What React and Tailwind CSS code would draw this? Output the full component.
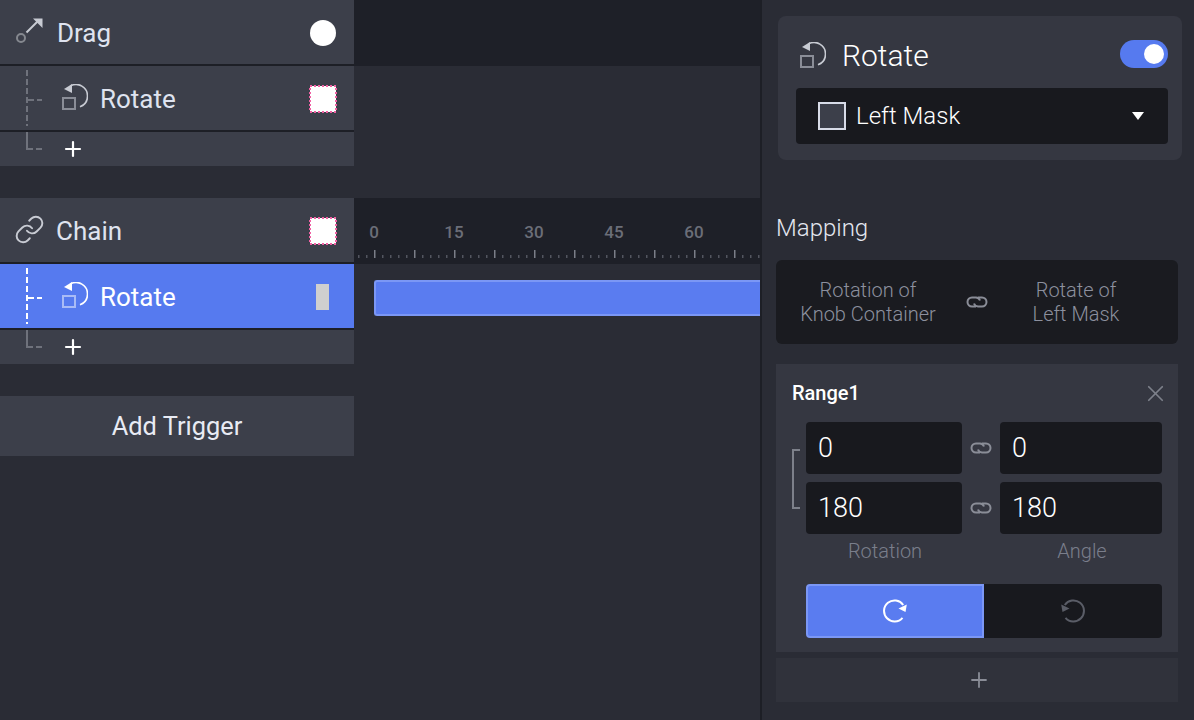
import { Link, Plus, X } from "lucide-react";

const RotateIcon = ({ active }) => (
  <svg width="26" height="26" viewBox="0 0 26 26" fill="none" className="shrink-0">
    <rect x="1" y="14" width="12" height="11" stroke={active ? "#a9bbf6" : "#8a8d97"} strokeWidth="2" />
    <path d="M8.5 1.9A11.5 11.5 0 0 1 25.5 12A11.5 11.5 0 0 1 18 22.8" stroke={active ? "#ffffff" : "#c8cbd3"} strokeWidth="1.6" />
    <path d="M2 5L10 0V9Z" fill={active ? "#ffffff" : "#c8cbd3"} />
  </svg>
);

const DragIcon = () => (
  <svg width="28" height="28" viewBox="0 0 28 28" fill="none" className="shrink-0">
    <circle cx="5" cy="21" r="4" stroke="#85888f" strokeWidth="2" />
    <path d="M10.5 15.5L23 3" stroke="#c8cbd3" strokeWidth="2" />
    <path d="M17 1.5H26.5V11Z" fill="#c8cbd3" />
  </svg>
);

const ChainSmall = ({ color = "#8a8d97" }) => (
  <svg width="22" height="12" viewBox="0 0 22 12" fill="none" className="shrink-0">
    <path d="M10 10.5H6a4.5 4.5 0 0 1 0-9H10a4.5 4.5 0 0 1 4 3" stroke={color} strokeWidth="2" />
    <path d="M12 1.5H16a4.5 4.5 0 0 1 0 9H12a4.5 4.5 0 0 1-4-3" stroke={color} strokeWidth="2" />
  </svg>
);

const Marquee = () => (
  <svg width="28" height="28" viewBox="0 0 28 28" className="shrink-0 -mx-[1px] mt-[2px]">
    <rect x="1" y="1" width="26" height="26" fill="#ffffff" stroke="#f062a4" strokeWidth="2" strokeDasharray="2 2" />
  </svg>
);

const TreeLines = ({ top }) => (
  <svg width="20" height="100" viewBox="0 0 20 100" fill="none" className="absolute left-[26px] top-[70px]">
    <path d="M1 0V56" stroke={top} strokeWidth="2" strokeDasharray="6 3" />
    <path d="M2 30H16" stroke={top} strokeWidth="2" strokeDasharray="6 3" />
    <path d="M1 62V79H7M10 79H16" stroke="#6f727c" strokeWidth="2" />
  </svg>
);

const Row = ({ icon, label, right, active, sub }) => (
  <div className={`h-[64px] flex items-center justify-between ${sub ? "pl-[62px]" : "pl-[16px]"} pr-[18px] ${active ? "bg-[#567aef]" : "bg-[#3c3f4a]"}`}>
    <div className={`flex items-center ${sub ? "gap-[12px]" : "gap-[13px]"}`}>
      <div className="pb-[2px]">{icon}</div>
      <span className={`text-[26px] leading-none pt-[2px] ${active ? "text-white" : "text-[#dfe3ef]"}`}>{label}</span>
    </div>
    {right}
  </div>
);

const AddRow = () => (
  <div className="h-[34px] bg-[#3c3f4a] flex items-center pl-[61px]">
    <Plus size={24} strokeWidth={2.2} color="#ffffff" />
  </div>
);

const Group = ({ icon, label, right, subRight, active }) => (
  <div className="relative">
    <Row icon={icon} label={label} right={right} />
    <div className="h-[2px] bg-[#1d1f26]" />
    <Row sub active={active} icon={<RotateIcon active={active} />} label="Rotate" right={subRight} />
    <div className="h-[2px] bg-[#1d1f26]" />
    <AddRow />
    <TreeLines top={active ? "#ffffff" : "#6f727c"} />
  </div>
);

const Ruler = () => {
  const ticks = [];
  for (let x = 4; x < 406; x += 8) {
    const major = (x - 20) % 40 === 0;
    ticks.push(<rect key={x} x={x} y={major ? 0 : 5} width="1.5" height={major ? 8 : 3} fill={major ? "#7b7e88" : "#52555f"} />);
  }
  return (
    <svg width="406" height="8" viewBox="0 0 406 8" className="block mt-[8px]">
      {ticks}
    </svg>
  );
};

const ValueInput = ({ value, wide }) => (
  <div className={`${wide ? "w-[162px]" : "w-[156px]"} h-[52px] bg-[#18191e] rounded-[4px] flex items-center pl-[12px] text-[27px] font-light text-white`}>
    {value}
  </div>
);

const Spin = ({ color, flip }) => (
  <svg width="24" height="24" viewBox="0 0 24 24" fill="none" className={flip ? "-scale-x-100" : ""}>
    <path d="M20.2 6A10.5 10.5 0 1 0 19.5 18.8" stroke={color} strokeWidth="2" />
    <path d="M15.5 9.5L23.8 5.5L22.5 13Z" fill={color} />
  </svg>
);

export default function App() {
  const labels = ["0", "15", "30", "45", "60"];
  return (
    <div className="w-[1194px] h-[720px] overflow-hidden flex bg-[#2a2c35] font-[Roboto,sans-serif]">
      <div className="w-[354px] shrink-0">
        <Group icon={<DragIcon />} label="Drag" right={<div className="w-[26px] h-[26px] mt-[2px] rounded-full bg-white" />} subRight={<Marquee />} />
        <div className="h-[32px]" />
        <Group active icon={<Link size={31} strokeWidth={1.5} color="#c8cbd3" className="-mx-[2px]" />} label="Chain" right={<Marquee />}
          subRight={<div className="w-[13px] h-[26px] mt-[2px] bg-[#cfcfcf] mr-[7px]" />} />
        <button className="mt-[32px] w-full h-[60px] bg-[#3c3f4a] text-[25.4px] text-[#e8ebf4]">Add Trigger</button>
      </div>

      <div className="w-[406px] shrink-0">
        <div className="h-[66px] bg-[#1e2028]" />
        <div className="h-[132px]" />
        <div className="h-[66px] bg-[#1e2028] pt-[24px]">
          <div className="flex gap-[40px]">
            {labels.map((l) => (
              <span key={l} className="w-[40px] text-center text-[17px] leading-[20px] font-medium text-[#6b6e78]">{l}</span>
            ))}
          </div>
          <Ruler />
        </div>
        <div className="pt-[16px] pl-[20px]">
          <div className="h-[36px] bg-[#5a7cf0] border-2 border-r-0 border-[#7b97f5] rounded-l-[3px]" />
        </div>
      </div>

      <div className="flex-1 border-l-2 border-[#1d1f26] pl-[14px] pt-[16px]">
        <div className="ml-[2px] w-[404px] h-[144px] bg-[#353741] rounded-[8px] pt-[24px] px-[18px] pr-[14px]">
          <div className="flex items-center justify-between pl-[4px] h-[28px]">
            <div className="flex items-center gap-[16px]">
              <div className="pt-[2px]"><RotateIcon /></div>
              <span className="text-[30px] leading-none pt-[4px] font-light text-white">Rotate</span>
            </div>
            <div className="w-[48px] h-[28px] rounded-full bg-[#567aef] flex items-center justify-end pr-[4px]">
              <div className="w-[20px] h-[20px] rounded-full bg-white" />
            </div>
          </div>
          <div className="mt-[20px] h-[56px] bg-[#18191e] rounded-[4px] flex items-center justify-between pl-[22px] pr-[24px]">
            <div className="flex items-center gap-[10px]">
              <div className="w-[28px] h-[28px] border-2 border-[#d8dce8] bg-[#3c3f4a]" />
              <span className="text-[24px] font-light text-white">Left Mask</span>
            </div>
            <svg width="12" height="8" viewBox="0 0 12 8"><path d="M0 0H12L6 8Z" fill="#ffffff" /></svg>
          </div>
        </div>

        <div className="mt-[52px] text-[24px] leading-[32px] font-light text-[#e4e7f0]">Mapping</div>
        <div className="mt-[16px] w-[402px] h-[84px] bg-[#1a1b20] rounded-[6px] flex items-center text-[20px] leading-[24px] font-light text-[#8c909e]">
          <div className="w-[184px] text-center pb-[1px]">Rotation of<br />Knob Container</div>
          <div className="w-[34px] flex justify-center"><ChainSmall /></div>
          <div className="w-[164px] text-center pb-[1px]">Rotate of<br />Left Mask</div>
        </div>

        <div className="mt-[20px] w-[402px] h-[288px] bg-[#353741] relative">
          <div className="flex items-center justify-between h-[58px] pl-[16px] pr-[9px]">
            <span className="text-[20px] font-medium text-white">Range1</span>
            <X size={27} strokeWidth={1.5} color="#7d808a" />
          </div>
          <div className="flex pl-[30px] items-center">
            <div className="w-[156px] flex flex-col gap-[8px]">
              <ValueInput value="0" />
              <ValueInput value="180" />
            </div>
            <div className="w-[38px] flex flex-col items-center gap-[48px]">
              <ChainSmall />
              <ChainSmall />
            </div>
            <div className="flex flex-col gap-[8px]">
              <ValueInput value="0" wide />
              <ValueInput value="180" wide />
            </div>
          </div>
          <div className="absolute left-[16px] top-[85px] w-[8px] h-[60px] border-2 border-r-0 border-[#7d808a]" />
          <div className="flex pl-[31px] text-[20px] leading-[34px] font-light text-[#7a7e8b]">
            <div className="w-[156px] text-center">Rotation</div>
            <div className="w-[38px]" />
            <div className="w-[162px] text-center">Angle</div>
          </div>
          <div className="mt-[16px] ml-[30px] w-[356px] h-[54px] flex">
            <div className="w-[178px] bg-[#5a7cf0] border-2 border-[#7b97f5] rounded-l-[4px] flex items-center justify-center">
              <Spin color="#ffffff" />
            </div>
            <div className="flex-1 bg-[#18191e] rounded-r-[4px] flex items-center justify-center">
              <Spin color="#5a5d67" flip />
            </div>
          </div>
        </div>

        <div className="mt-[6px] w-[402px] h-[44px] bg-[#30323b] flex items-center justify-center pl-[4px]">
          <Plus size={24} strokeWidth={1.8} color="#8a8d97" />
        </div>
      </div>
    </div>
  );
}
